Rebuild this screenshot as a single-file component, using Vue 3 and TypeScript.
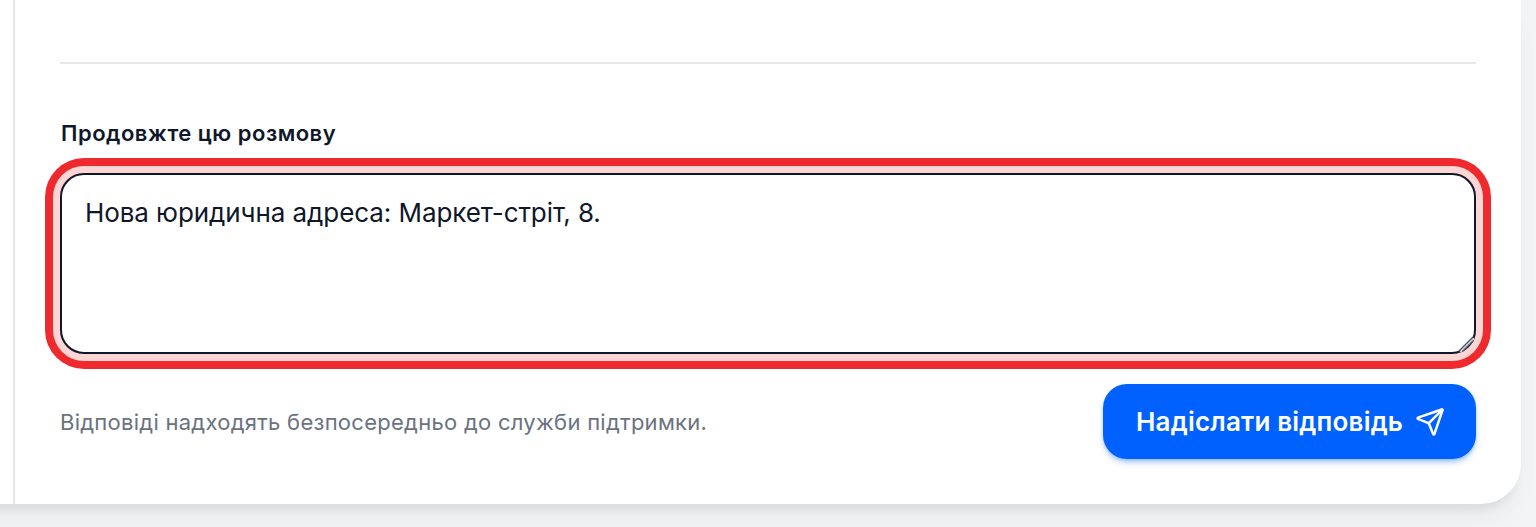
<script setup lang="ts">
const value = 'Нова юридична адреса: Маркет-стріт, 8.'
</script>

<template>
  <div class="page">
    <section class="card">
      <div class="column">
        <hr class="divider" />
        <label class="label" for="reply">Продовжте цю розмову</label>
        <div class="ring">
          <textarea id="reply" class="input" :value="value"></textarea>
          <svg class="grip" viewBox="0 0 16 16" fill="none" stroke-linecap="round">
            <path d="M3 15 15 3" stroke="#d1d5db" stroke-width="2.4" />
            <path d="M1 15 15 1" stroke="#4b5563" stroke-width="1.2" />
            <path d="M5 15 15 5" stroke="#4b5563" stroke-width="1.2" />
          </svg>
        </div>
        <div class="footer">
          <p class="hint">Відповіді надходять безпосередньо до служби підтримки.</p>
          <button class="send" type="button">
            <span class="send-text">Надіслати відповідь</span>
            <svg class="icon" viewBox="0 0 24 24" fill="none" stroke="currentColor" stroke-width="2" stroke-linecap="round" stroke-linejoin="round">
              <path d="M14.536 21.686a.5.5 0 0 0 .937-.024l6.5-19a.496.496 0 0 0-.635-.635l-19 6.5a.5.5 0 0 0-.024.937l7.93 3.18a2 2 0 0 1 1.112 1.11z" />
              <path d="m21.854 2.147-10.94 10.939" />
            </svg>
          </button>
        </div>
      </div>
    </section>
  </div>
</template>

<style>
html, body { margin: 0; background: #f3f4f6; }
</style>

<style scoped>
.page {
  width: 1536px;
  height: 527px;
  overflow: hidden;
  background: #f3f4f6;
  font-family: Inter, "Noto Sans", sans-serif;
}
.card {
  box-sizing: border-box;
  width: 1561px;
  height: 504px;
  margin-left: -40px;
  padding-left: 53px;
  background: #fff;
  border-radius: 0 0 40px 0;
  box-shadow: 0 10px 8px -4px rgba(0, 0, 0, 0.06), 0 20px 30px -8px rgba(0, 0, 0, 0.05);
}
.column {
  box-sizing: border-box;
  height: 100%;
  padding: 62px 45px 0;
  border-left: 2px solid #e5e7eb;
}
.divider {
  margin: 0;
  height: 2px;
  border: 0;
  background: #e5e7eb;
}
.label {
  display: block;
  margin-top: 56px;
  margin-left: 1px;
  font-size: 22px;
  line-height: 27px;
  letter-spacing: 0.5px;
  font-weight: 600;
  color: #0f172a;
}
.ring {
  position: relative;
  margin-top: 26px;
  border-radius: 24px;
  display: flex;
  box-shadow: 0 0 0 7px #fcd5d5, 0 0 0 15px #ee2a2f;
}
.input {
  box-sizing: border-box;
  display: block;
  width: 100%;
  height: 181px;
  padding: 20px 23px;
  border: 2px solid #0f172a;
  border-radius: 24px;
  outline: none;
  resize: none;
  background: #fff;
  color: #0f172a;
  font-family: inherit;
  font-size: 26px;
  line-height: 36px;
  letter-spacing: -0.08px;
}
.grip {
  position: absolute;
  right: 2px;
  bottom: 2px;
  width: 16px;
  height: 16px;
}
.footer {
  display: flex;
  align-items: center;
  justify-content: space-between;
  margin-top: 30px;
}
.hint {
  margin: 0;
  font-size: 22px;
  line-height: 28px;
  letter-spacing: 0.27px;
  color: #6b7280;
}
.send {
  display: flex;
  align-items: center;
  gap: 12px;
  box-sizing: border-box;
  height: 75px;
  width: 373px;
  padding: 0 33px;
  border: 0;
  border-radius: 24px;
  background: #0061ff;
  color: #fff;
  font-family: inherit;
  font-size: 26px;
  letter-spacing: 0.2px;
  font-weight: 600;
  box-shadow: 0 4px 6px -1px rgba(0, 97, 255, 0.35), 0 2px 4px -2px rgba(0, 97, 255, 0.35);
}
.send-text {
  white-space: nowrap;
}
.icon {
  width: 30px;
  height: 30px;
  flex: none;
}
</style>
